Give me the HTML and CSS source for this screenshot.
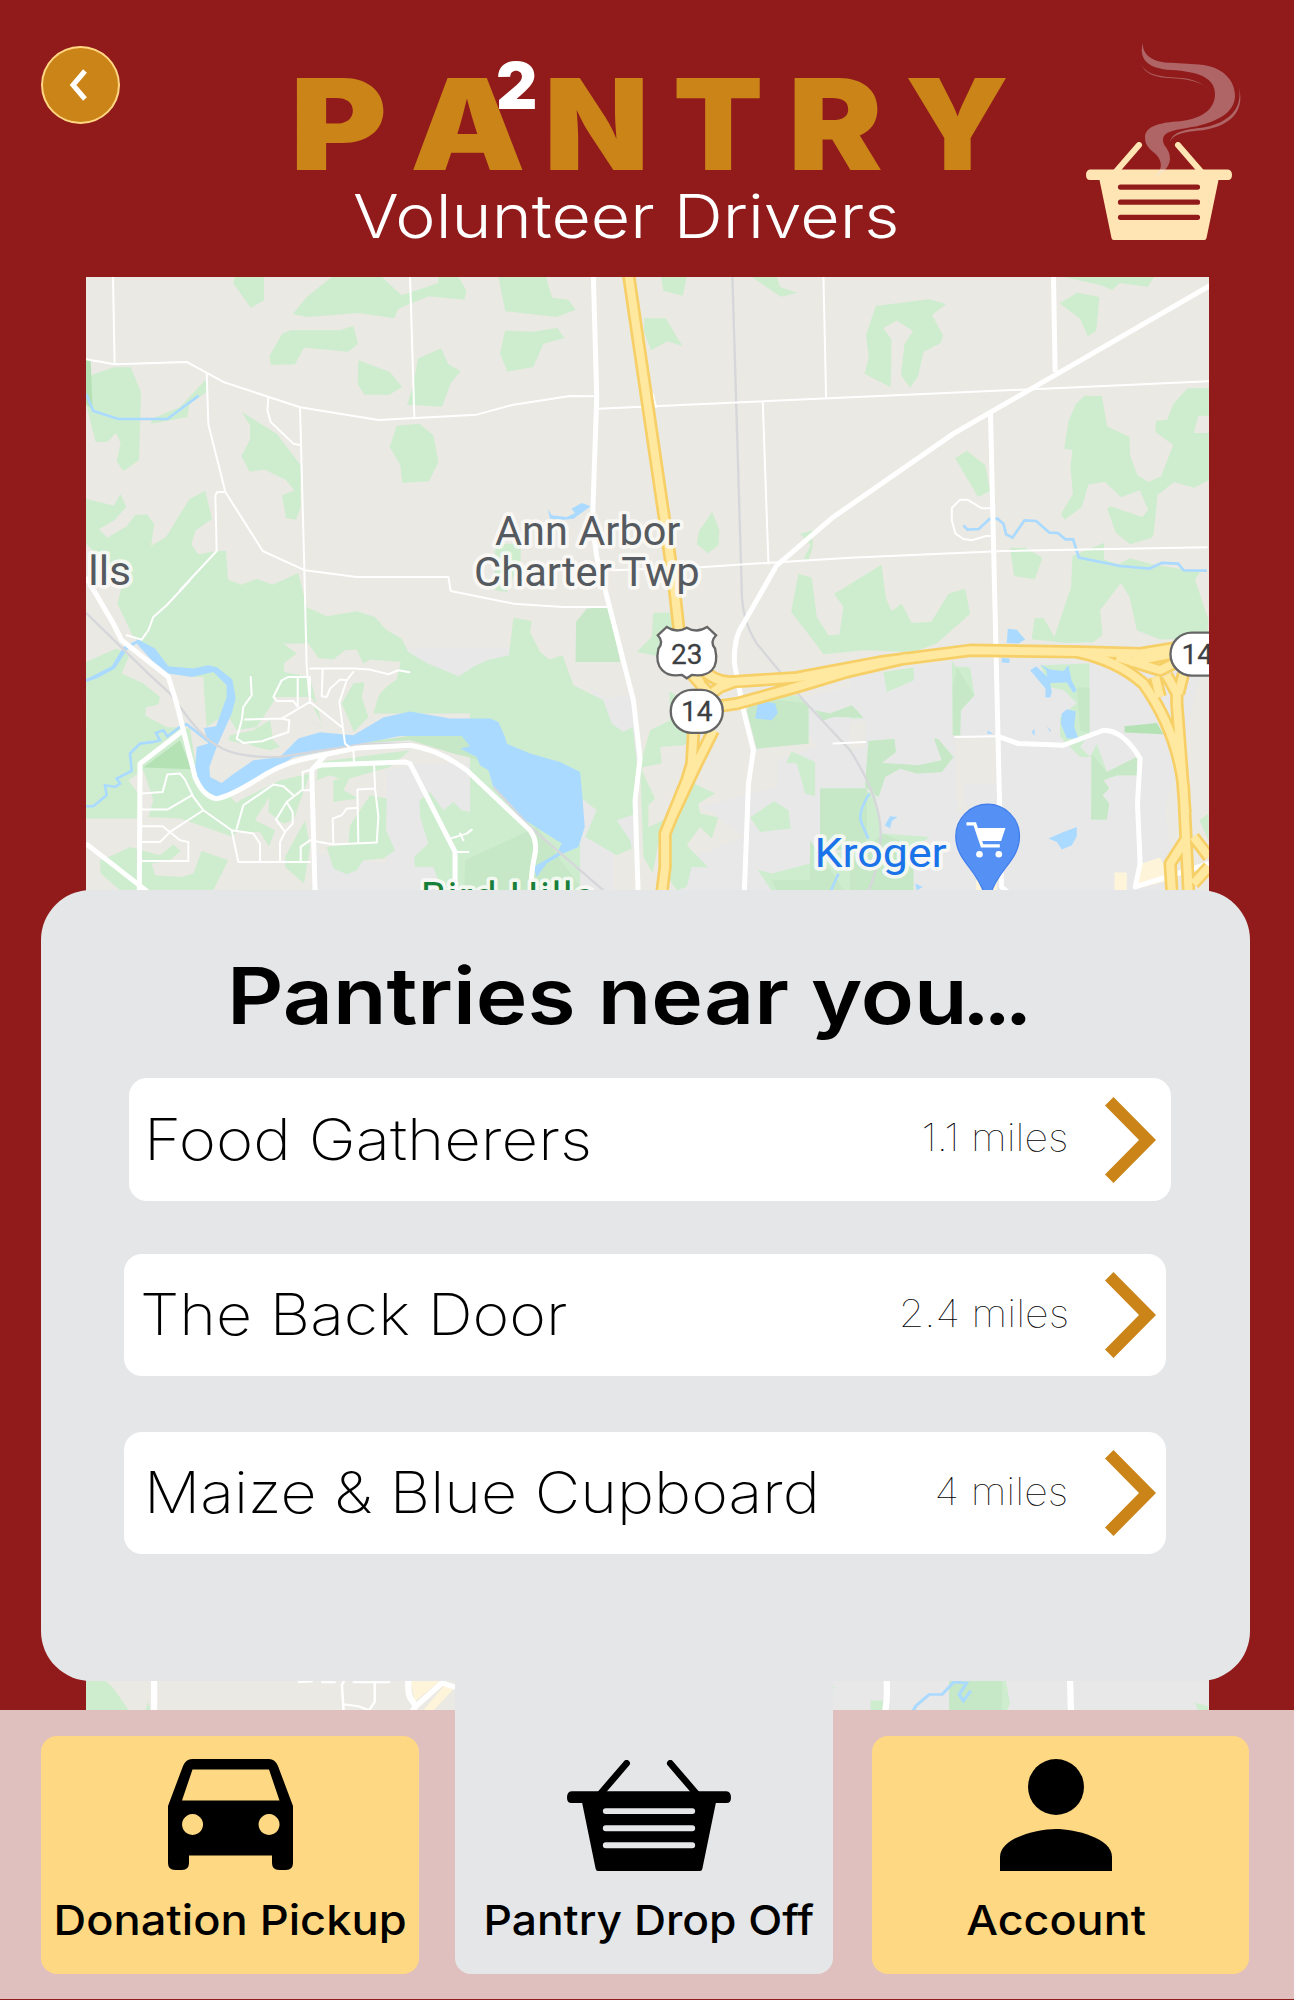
FILE: index.html
```html
<!DOCTYPE html>
<html lang="en">
<head>
<meta charset="utf-8">
<title>Pantry – Volunteer Drivers</title>
<link rel="stylesheet" href="styles.css">
</head>
<body>
<svg class="defs" width="0" height="0" aria-hidden="true">
  <symbol id="basket" viewBox="0 0 146 98" preserveAspectRatio="none">
    <path d="M27 33 53 3M118 33 92 3" fill="none" stroke="currentColor" stroke-width="6" stroke-linecap="round"/>
    <path fill="currentColor" fill-rule="evenodd" d="M4 27.500H142Q146 28 146 33T142 38H132.500L120.500 96Q120 98 118.500 98H27.500Q26 98 25.500 96L13.500 38H4Q0 38 0 33T4 27.500ZM34.500 42.500a2.600 2.600 0 0 0 0 5.200H111.500a2.600 2.600 0 0 0 0-5.200ZM34.500 57.600a2.600 2.600 0 0 0 0 5.200H111.500a2.600 2.600 0 0 0 0-5.200ZM34.500 72.700a2.600 2.600 0 0 0 0 5.200H111.500a2.600 2.600 0 0 0 0-5.200Z"/>
  </symbol>
  <symbol id="chevron" viewBox="0 0 51 86">
    <path fill="currentColor" d="M0 8.500 8.500 0 51 43 8.500 86 0 77.500 34 43Z"/>
  </symbol>
</svg>

<header class="header">
  <button class="back" aria-label="Back"><svg width="18" height="36" viewBox="0 0 18 36"><path d="M16 4 4 18 16 32" fill="none" stroke="#fff" stroke-width="5"/></svg></button>
  <div class="brand">
    <h1 class="logo"><span class="l1">P</span><span class="l2">A</span><span class="l3">N</span><span class="l4">T</span><span class="l5">R</span><span class="l6">Y</span><sup class="two">2</sup></h1>
    <p class="subtitle"><span>Volunteer Drivers</span></p>
  </div>
  <div class="mark">
    <svg class="mark-basket"><use href="#basket"/></svg>
    <svg class="steam" viewBox="0 0 102 172" preserveAspectRatio="none">
      <path d="M2 0C1 8 4 25 30 26L58 28C82 30 94 48 94 68C93 88 78 98 56 105C38 109 22 110 22 122C22 131 29 132 29 146C28 158 20 165 11 170C20 162 21 154 19 148C17 137 4 135 4 119C4 105 18 101 35 99C60 97 74 84 74 65C74 45 58 37 30 35C3 33-2 18 2 0Z"/>
      <path d="M0 28C8 48 27 43 46 47Q64 51 69 62Q60 47 40 45C22 43 7 43 0 28ZM98 57C105 91 84 106 62 110C44 112 31 114 29 126C30 111 47 109 61 107C84 102 102 87 98 57Z"/>
    </svg>
  </div>
</header>

<main class="stage">
<svg class="map" viewBox="18 20 3367 4301" preserveAspectRatio="none" role="img" aria-label="Map of Ann Arbor">
  <rect class="land" x="0" y="0" width="3400" height="4330"/>
  <g class="urban">
    <path transform="translate(0 930)" d="M980 205H1300V330H1130ZM920 570 1020 550H1600V1000H700V820L920 850ZM1170 200 1340 205 1320 300ZM1530 320 1670 420V520L1560 480Z"/>
    <path transform="translate(1170 930)" d="M395 360 490 340 520 560 400 430ZM690 680 920 620V540L1040 500 960 360 1400 260H2200L2000 1000H620V850L820 770 730 700ZM330 660 380 690 340 720ZM430 720 490 700V800L430 760Z"/>
    <path transform="translate(2310 930)" d="M0 290 330 240 880 250 990 1000H0Z"/>
    <path transform="translate(1680 4190)" d="M500 0H1710V131H500Z"/>
  </g>
  <g class="land">
    <path transform="translate(2310 930)" d="M315 470H440V610H340V660L370 700 322 695ZM0 425 45 420V500L0 510Z"/>
  </g>
  <g class="grass">
    <path d="M465 20H552V90L512 112 459 38ZM755 20H905L965 75 1075 38V20H1135L1159 60 1153 88 1045 78 955 115 942 144 835 128 685 140 638 132 680 80ZM632 180H780L820 167 834 220 805 244 672 232 645 282 572 284 568 258 606 190ZM835 270 930 305 966 350 928 373H853L833 340ZM1013 265 1083 234 1105 282 1142 303 1112 338 1086 409 981 403 1000 345ZM950 466 1018 460 1060 495 1075 575 1047 633 967 638 960 582 929 530ZM485 425 590 490 662 585V710L648 748 618 744 606 675 643 660 617 628 555 598 508 604 484 557 510 508V465ZM18 320 103 291H152L183 365 177 570 130 602 110 573 122 518 108 488 82 515H47L18 400ZM215 445 300 410 380 325V365L328 400 322 440 214 460ZM18 685 102 706 121 670 139 710 103 750 57 777 82 802 140 768 165 735 200 732 223 760 213 827 258 800 328 686 376 661 396 746 347 780 334 822 354 852 412 842H438L444 928 484 943 530 926 578 943 655 908 680 1010 740 1038 830 1023 885 1040 920 1080 965 1105 985 1145 1040 1178 1135 1218 1200 1180V1330H1100L880 1330 900 1260 950 1228 962 1175 870 1168 850 1180 830 1138 795 1140 760 1168 715 1163 685 1120 610 1120 650 1150 612 1178 612 1205 690 1220 720 1340 728 1372 700 1360 690 1300 640 1290 590 1280 530 1370 470 1380 440 1330 380 1370 370 1240 330 1215 260 1195 160 1100 112 1000 130 930 18 820Z"/>
    <path transform="translate(0 930)" d="M18 245 110 205 148 225 125 280 190 310 240 350 235 375 200 380 195 405 260 440 330 445 345 540 500 700 460 770 300 715 205 710 220 660 190 570 145 600 175 640V715H18V440L45 405 60 350 110 320 168 345 165 378 105 358V405L180 430 140 475 20 462ZM520 450 570 420 580 480 600 500 570 510 445 480 450 465ZM820 310 855 305 845 350 865 410 822 455 785 370ZM60 840 110 820 150 800 240 825 280 793 302 812 270 840 215 850 225 885 305 890 340 880 365 812 445 840 400 930H120L62 880ZM480 660 600 600 690 580 640 720 610 730 565 695 568 650 525 720 585 750 567 800 540 755 475 755 440 700ZM715 545 990 510 930 560 790 600 750 585 710 600ZM760 600 810 590 790 630 835 655 760 665ZM870 645 920 655 918 750 945 810 910 835 850 840 830 870 800 882 760 865 740 800 805 790 810 735ZM615 830 675 720 690 800 672 910 615 860ZM1050 635 1090 690 1120 665 1145 690 1190 700 1240 695 1400 1000H1110L1060 860 1005 860 1002 830 1045 790 1020 710 1018 660Z"/>
    <path transform="translate(1170 0)" d="M85 20H228L246 82 295 88 317 118 260 140 106 123ZM105 181 190 184 262 173 283 203 220 220 190 290 112 304 90 250ZM522 144H587L637 227 592 213 543 240 522 185ZM573 20H650L638 76 580 62ZM845 20H920L930 50 982 67 932 79ZM726 724 748 780 745 825 714 849 680 822 687 782ZM990 790 1028 780V830L1015 870 1000 865 1022 825ZM985 910 1025 922 1040 1040 1075 1095 1108 1093 1120 1010 1092 970 1110 960 1234 883 1248 985 1265 1022 1295 1000 1325 1058 1383 1055 1435 970 1485 955 1500 1030 1400 1120 1330 1145 1180 1140 1060 1152 1010 1085 963 1025ZM75 820H152V870L110 965 75 960Z"/>
    <path transform="translate(1170 930)" d="M0 265 50 240 117 225 130 112 185 122 180 155 210 215 238 238 278 225 310 315 400 360 425 430 460 455 488 440 500 550 500 700 440 720 480 780 485 805 440 825 345 770 380 690 330 650V930H0L0 400ZM318 125 350 85 415 80 450 245H317ZM550 97H600L625 240 500 215 545 170ZM598 332 650 370 650 490 640 495 570 500 575 550 520 560 500 590 540 450 600 420ZM510 560 555 655 535 675V740L580 720 650 600 735 640 685 670 690 700 745 712 725 775 690 740 650 795 715 862 665 860 650 920 620 930 600 900 585 760 570 760 548 880 520 830ZM860 340 910 350 980 345 1015 370V490L860 505 830 390ZM965 514 1035 545V648L1005 640 980 550 948 548ZM840 712 912 662 955 690 962 745 870 755ZM862 868 905 880 1020 850 1200 780V1000H950ZM1050 625H1190L1210 800 1050 810Z"/>
    <path transform="translate(2310 0)" d="M640 20H912L893 49 807 38 787 59 750 44ZM628 99 682 67 748 80 738 182 713 198 690 145ZM77 107 235 87 288 101 246 134 279 196 271 219 220 244 204 318 180 352 153 315 163 222 189 182 140 151 99 173 124 207 122 351 43 310 56 265 48 194ZM350 541 405 584 420 662 384 680 315 564ZM703 376 755 377 771 468 838 500 840 556 862 615 895 635 933 618 969 524 915 484 918 451 951 449 969 402 1012 354H1076V436H1045L1031 488H1076V630L1032 652 971 635 922 675 910 795 902 804 840 822 797 787 771 715 780 708 877 740 894 718 869 660 812 681 765 635 715 642 695 710 644 748 632 732 668 670 661 590 667 538 642 535 655 452 677 402ZM480 832H525L577 862 554 927 492 918ZM667 857 762 817V868L805 882 840 864 905 882 1050 905 1035 928 1075 1050 1070 1105 930 1108 860 1080 838 980 812 938 750 1020 757 1095 730 1115 650 1118 545 1107 553 1043 580 1043 613 1100 663 950Z"/>
    <path transform="translate(2310 930)" d="M100 275 190 262 192 300 110 335ZM305 240 315 258 360 262 373 345 332 390 330 465H308ZM570 255 718 250V460L690 500 720 530 740 490 770 575 860 530V585L800 585 760 600 777 625 757 645 777 670 770 718H723V530H690L630 470V410L680 368 640 330 600 320ZM55 482 133 476 137 515 95 548 205 555 275 540 252 475 265 478 310 530 275 575 200 580 150 565 105 590 85 650 45 620ZM0 622 75 640 95 760 240 770 190 800V930H0ZM1048 720 1075 700V780ZM1 375 40 415 0 415Z"/>
    <path transform="translate(-240 4170) scale(1.263 1)" d="M200 60H250L270 85 306 151H200ZM345 151 352 125 357 151Z"/>
    <path transform="translate(1680 4170) scale(1.251 1)" d="M553 121H583V151H553ZM741 62H877L887 130 880 151H741ZM1331 128 1362 138V151H1337ZM463 78 468 82 463 88Z"/>
  </g>
  <g class="park">
    <path d="M18 265 32 270 38 420 18 400ZM190 1492 300 1410 335 1497Z"/>
    <path transform="translate(0 930)" class="soft" d="M830 490 1000 465 1150 465 1200 540 1120 520 990 480ZM1155 840 1370 740 1560 1000H1150Z"/>
    <path transform="translate(1170 930)" class="soft" d="M318 125 350 85 415 80 450 245H317ZM860 350 1015 370V490L860 505 830 390ZM1050 625H1190V810H1050ZM1035 390 1080 400 1145 375 1180 412 1090 410 1060 420ZM905 900 1020 900V780L1170 1000H950Z"/>
    <path transform="translate(2310 930)" class="soft" d="M308 320 320 260 373 345 332 390 330 465H308ZM680 322H718V460L690 450ZM725 520 770 575 860 530V585L800 585 760 600 777 625 757 645 777 670 770 718H723ZM55 482 133 476 137 515 95 548 205 555 275 540 252 475 265 478 310 530 275 575 200 580 150 565 105 590 85 650 45 620ZM0 840 100 760 190 800V930H0Z"/>
    <path transform="translate(2310 930)" d="M823 438 920 428 940 462 823 457Z"/>
    <path transform="translate(1680 4170) scale(1.251 1)" class="soft" d="M741 62H868V151H741Z"/>
  </g>
  <g class="land">
    <path transform="translate(0 930)" d="M195 385 240 370 275 340 300 400 270 430 210 415ZM265 290 370 290 375 400 320 380ZM395 560 500 490 600 530 480 580 425 608 390 590ZM585 350 690 350 780 430 700 380 730 440 700 430 690 380 640 390 615 430 570 405ZM735 270 830 275 790 350 745 340ZM850 300 930 275 950 290 900 340 870 400Z"/>
  </g>
  <g class="sand">
    <path transform="translate(2310 930)" d="M793 877H830V930H793ZM875 850 930 832 945 860 960 900 860 925ZM378 900H440V930H378Z"/>
    <path transform="translate(-240 4170) scale(1.263 1)" d="M975 60H1048L985 125ZM1005 151 1055 75 1082 80 1030 151Z"/>
  </g>

  <g class="water">
    <path transform="translate(0 930)" d="M18 297 95 258 130 200 155 188 175 178 225 205 265 258 340 265 385 255 412 262 457 298 467 355 455 400 410 500 388 560 390 590 425 608 455 585 520 540 600 530 655 475 720 456 820 465 910 412 990 394 1110 415H1230L1255 425 1275 470 1280 490 1350 520 1440 545 1500 575 1507 650 1514 740 1495 800 1450 820 1400 850 1370 890 1360 860 1430 820 1445 790 1320 710 1240 620 1225 570 1200 555 1190 530 1140 505 1170 498 1145 467 960 467 820 495 640 530 500 620 410 650 360 620 345 570 350 500 385 490 372 443 408 438 440 350 440 315 400 275 335 290 265 280 215 240 170 190 140 210 105 265 50 295 18 305Z"/>
    <path class="stream" d="M18 370 40 422 115 446H262L356 376"/>
    <path class="stream" transform="translate(0 930)" d="M18 678H40L80 645 75 615 105 620 120 610 110 595 155 572 150 520 180 490 220 485 240 480 228 458 250 450 262 468 300 440 320 432 400 495"/>
    <path transform="translate(1170 0)" d="M233 716 245 735 290 740 315 728 304 715 335 698 362 708 345 720 310 745 280 748 240 745Z"/>
    <path class="stream" transform="translate(2310 0)" d="M340 765 352 778 386 776 418 746 442 745 460 760 468 792 487 802 523 750 558 752 598 787 623 788 646 807H669L686 862 810 887 897 895 935 878 984 880 1000 900 1070 901"/>
    <path transform="translate(1170 930)" d="M863 372 890 365 915 370 923 398 905 420 855 415Z"/>
    <path transform="translate(2310 930)" d="M473 145 500 148 525 178 505 190 470 188ZM455 233 478 235V248L455 247ZM540 270 558 258 592 290 588 270 570 253 600 268 640 272 655 255 664 300 680 330 670 338 650 307 600 308 605 335 600 352 586 352V325ZM650 387 677 393 672 440 685 475 650 475 632 430 635 400ZM595 775 640 755 680 740V768L665 795 635 808 620 785ZM120 708 142 710 125 722 120 745 104 735ZM412 450 430 462 412 460ZM545 455 553 445V468ZM590 437 602 450 600 455ZM195 910 218 920 200 930Z"/>
    <path class="stream" transform="translate(2310 930)" d="M58 640Q20 700 35 730L55 775M-35 880-70 960"/>
    <path class="stream" transform="translate(1680 4170) scale(1.251 1)" d="M655 151 662 136 693 103H724L752 66 783 68 765 103 775 122 793 92"/>
  </g>

  <g class="rail">
    <path d="M18 1028 205 1210 270 1270 330 1350C390 1430 450 1465 600 1460L860 1420 990 1420 1140 1480M1240 1550 1350 1670 1570 1860"/>
    <path transform="translate(1170 0)" d="M787 20 815 960Q815 1050 860 1120L1000 1290 1140 1440Q1230 1580 1232 1690 1225 1800 1195 1860"/>
  </g>

  <g class="minor">
    <path d="M99 20 104 282M18 267 104 282 320 275 430 335 660 411 895 449 1190 433 1300 403 1470 377 1550 378M565 382 562 420 572 455 640 520 660 524M380 310 385 462 436 665 548 842 675 900 830 920H1105L1112 962 1300 1000 1450 1010H1580M436 665H412L406 675 410 842 300 960M990 20 1003 442M660 411 672 860 680 1190 690 1295M1555 415 3385 333"/>
    <path transform="translate(0 930)" d="M330 0 260 75 220 110 205 150 185 178 140 165"/>
    <path transform="translate(1170 0)" d="M1060 20 1068 380M878 395 895 880M425 900 700 890 1140 862 1600 842 2210 831M548 370 558 410"/>
    <path transform="translate(2310 0)" d="M428 714H395L352 688H330L305 713V750L316 790 340 806 365 810 408 797H430"/>
    <path transform="translate(0 930)" d="M512 290 515 345 490 380 485 420 470 475 490 488 545 483 625 455 628 420 605 415 495 418M605 415 690 365 690 290H625L605 300 580 350 590 362H640L653 380V290M690 265H820L870 268 925 282 955 270 988 276M728 268 725 348 740 350 750 325 780 298 800 300 820 275M800 300 778 365 795 490 820 510 822 545M690 365 785 440M185 640 248 635 262 583 300 580 315 598 340 650 370 690 455 750 520 760 540 790V840M185 688H262L335 645M370 690 270 755 240 785H185M185 738H248L300 780 325 785V842H185M455 750 475 845H690M470 745 490 675 580 613 610 618 640 645M690 630H665L620 665 588 718 615 755 600 785V840M620 665 638 695V730L615 755M720 560 668 575V630M690 780 662 800V840M690 780 760 793 890 787 895 710 885 625 832 628 835 790M760 793 758 715 785 705 800 685 828 683M885 625 882 550M1110 775 1160 760 1175 748M1130 815H1165M1140 760 1150 780"/>
    <path transform="translate(2310 930)" d="M315 470 440 468M-50 490 45 485"/>
    <path transform="translate(-240 4170) scale(1.263 1)" d="M818 60 812 75 816 151M816 132 850 138 878 151M890 60V125L878 148M710 66 740 64M765 66H795M840 66H925"/>
  </g>

  <g class="major">
    <path d="M18 920 100 1060 125 1110 265 1220 290 1300 345 1520Q370 1580 410 1585 450 1580 560 1510 620 1475 700 1460L830 1433 990 1425Q1080 1440 1160 1500L1350 1680Q1372 1710 1365 1750 1350 1820 1355 1860M310 1380 180 1480 178 1860M18 1720 210 1870M735 1455 695 1500 705 1860M710 1485 975 1475 990 1480 1125 1745V1860"/>
    <path transform="translate(1170 0)" d="M370 20 380 380 367 760 380 860 490 1290 510 1465 495 1590 504 1860"/>
    <path transform="translate(1170 0)" d="M2220 45 1450 490 1090 740 920 885 820 1060Q790 1100 793 1180L820 1320 850 1440 835 1540 823 1860"/>
    <path transform="translate(2310 0)" d="M610 20 615 305M421 425 454 1850 490 1880M448 1400 505 1420 640 1425 760 1380Q820 1380 870 1465L862 1600 870 1780 855 1850 1076 1780"/>
    <path transform="translate(-240 4170) scale(1.263 1)" d="M366 60V151M970 60Q968 100 975 115L988 138 1050 68 1082 82M988 138 980 151"/>
    <path transform="translate(1680 4170) scale(1.251 1)" d="M591 60Q594 110 588 151M1031 60 1033 151"/>
  </g>

  <g class="highway-edge">
    <path d="M1645 10 1780 930 1800 1110 1870 1260M1800 1170 1860 1240 1895 1280M1860 1190Q1900 1235 1950 1235L2150 1222 2400 1175 2670 1140 3000 1145 3180 1150 3300 1130M1880 1280 1920 1250 1960 1235M1900 1310 1970 1300 2150 1250 2300 1205 2480 1163M1840 1390 1835 1480 1820 1530 1755 1690 1755 1790 1745 1870M1900 1380 1850 1480 1775 1640"/>
    <path transform="translate(2310 930)" d="M680 215Q800 240 880 310 980 450 1000 620L1015 930M800 230 930 270 990 240M840 245 990 215M950 285 980 340 980 370 1005 700M1000 280 985 340M915 290 930 350M1005 780 960 850 965 930M1030 770 1076 830M1030 910 1076 860"/>
  </g>
  <g class="highway">
    <path d="M1645 10 1780 930 1800 1110 1870 1260M1800 1170 1860 1240 1895 1280M1860 1190Q1900 1235 1950 1235L2150 1222 2400 1175 2670 1140 3000 1145 3180 1150 3300 1130M1880 1280 1920 1250 1960 1235M1900 1310 1970 1300 2150 1250 2300 1205 2480 1163M1840 1390 1835 1480 1820 1530 1755 1690 1755 1790 1745 1870M1900 1380 1850 1480 1775 1640"/>
    <path transform="translate(2310 930)" d="M680 215Q800 240 880 310 980 450 1000 620L1015 930M800 230 930 270 990 240M840 245 990 215M950 285 980 340 980 370 1005 700M1000 280 985 340M915 290 930 350M1005 780 960 850 965 930M1030 770 1076 830M1030 910 1076 860"/>
  </g>

  <g class="shield">
    <path transform="translate(1170 930)" d="M590 140Q620 160 650 142 680 160 711 140L738 165Q718 185 735 205 745 250 725 270 705 290 665 284L650 294 636 284Q595 290 577 270 555 250 565 205 582 185 563 165Z"/>
    <rect x="1772" y="1259" width="156" height="129" rx="64"/>
    <rect x="3271" y="1087" width="180" height="129" rx="64"/>
    <text x="1820" y="1180" text-anchor="middle">23</text>
    <text x="1850" y="1352" text-anchor="middle">14</text>
    <text x="3304" y="1180">14</text>
  </g>
  <g class="place">
    <text x="25" y="944" textLength="128" lengthAdjust="spacingAndGlyphs">lls</text>
    <text x="1245" y="824" textLength="556" lengthAdjust="spacingAndGlyphs">Ann Arbor</text>
    <text x="1182" y="948" textLength="677" lengthAdjust="spacingAndGlyphs">Charter Twp</text>
    <text class="green" x="1022" y="1922" textLength="523">Bird Hills</text>
    <text class="blue" x="2203" y="1790" textLength="397" lengthAdjust="spacingAndGlyphs">Kroger</text>
  </g>
  <g transform="translate(2310 930)">
    <path d="M317 768A95.500 96 0 0 1 508 768C508 840 445 865 422 940H402C380 865 317 840 317 768Z" fill="#5590f5" stroke="#4480ec" stroke-width="4"/>
    <path d="M349 731H374L396 797H449" fill="none" stroke="#fff" stroke-width="10"/>
    <path d="M376 743H466L453 782H392Z" fill="#fff"/><circle cx="388" cy="822" r="10" fill="#fff"/><circle cx="446" cy="822" r="10" fill="#fff"/>
  </g>
</svg>

<section class="panel">
  <h2 class="panel-title"><span>Pantries near you<b class="dots">...</b></span></h2>
  <ul class="list">
    <li class="row first"><span class="name n1">Food Gatherers</span><span class="miles">1.1 miles</span><svg class="chev"><use href="#chevron"/></svg></li>
    <li class="row"><span class="name n2">The Back Door</span><span class="miles">2.4 miles</span><svg class="chev"><use href="#chevron"/></svg></li>
    <li class="row last"><span class="name n3">Maize &amp; Blue Cupboard</span><span class="miles">4 miles</span><svg class="chev"><use href="#chevron"/></svg></li>
  </ul>
</section>
</main>

<nav class="tabs">
  <a class="tab">
    <svg width="125" height="111" viewBox="0 0 125 111"><path fill-rule="evenodd" d="M24 0H101Q107 0 110 7L125 47V104Q125 111 118 111H111Q104 111 104 104V96.500H21V104Q21 111 14 111H7Q0 111 0 104V47L15 7Q18 0 24 0ZM24.500 10.500H101L111.500 41.500H14ZM24.500 55a10.500 10.500 0 1 0 .1 0ZM101 55a10.500 10.500 0 1 0 .1 0Z"/></svg>
    <span class="t1">Donation Pickup</span>
  </a>
  <a class="tab active">
    <svg width="164" height="111"><use href="#basket"/></svg>
    <span class="t2">Pantry Drop Off</span>
  </a>
  <a class="tab account">
    <svg width="112" height="112" viewBox="0 0 112 112"><circle cx="56" cy="28" r="28"/><path d="M0 112V98C0 79 37 70 56 70S112 79 112 98V112Z"/></svg>
    <span class="t3">Account</span>
  </a>
</nav>
</body>
</html>
```
FILE: styles.css
```css
* { box-sizing: border-box; }
body {
  margin: 0;
  width: 1294px;
  height: 2000px;
  overflow: hidden;
  display: grid;
  grid-template-rows: 276.5px 1433.5px 289px;
  background: #911b1b;
  font-family: Inter, "Open Sans", sans-serif;
  color: #000;
}
h1, h2, p, ul { margin: 0; padding: 0; }
.defs { position: absolute; }

/* Header */
.header { position: relative; display: grid; grid-template-columns: 297px 711px 286px; }
.back {
  width: 79px; height: 78px; margin: 46px 0 0 41px; padding: 0 5px 0 0;
  border: 2px solid #ffd782; border-radius: 50%; background: #cb8418;
  display: flex; align-items: center; justify-content: center;
}
.brand { padding-top: 74px; }
.logo {
  position: relative; display: grid; height: 100px; margin-left: -7px;
  grid-template-columns: 120px 134px 129px 115px 117px 100px;
  font-size: 126.500px; line-height: 100px; font-weight: 900; color: #cb8418;
}
span { display: inline-block; white-space: nowrap; transform-origin: 0 50%; }
.logo span { justify-self: start; }
.l1 { transform: scaleX(1.17); }
.l2 { transform: scaleX(1.15); }
.l3 { transform: scaleX(1.08); }
.l4 { transform: scaleX(1.04); }
.l5 { transform: scaleX(1.12); }
.l6 { transform: scaleX(1.06); }
.two { position: absolute; left: 206px; top: -38px; font-size: 64px; color: #fff; }
.subtitle { padding: 10px 0 0 56px; font-size: 60px; line-height: 64px; font-weight: 300; color: #fff; }
.subtitle span { transform: scaleX(1.134); }
.mark { position: relative; padding: 142px 0 0 78px; color: #ffe5b3; }
.mark-basket { display: block; width: 146px; height: 98px; }
.steam { position: absolute; left: 133px; top: 42px; width: 102px; height: 138px; fill: #e5e6e9; fill-opacity: .36; }

/* Map */
.stage { display: grid; grid-template-columns: 41px 45px 1122.500px 41px 1fr; grid-template-rows: 613px 791.500px 1fr; }
.map { grid-area: 1 / 3 / 4 / 4; width: 100%; height: 100%; display: block; }
.land { fill: #eae9e3; }
.urban { fill: #e8e8e8; }
.grass { fill: #ceedcf; }
.park { fill: #b5e2b5; }
.soft { fill: #c6e8c7; }
.sand { fill: #fdf4da; }
.water { fill: #aadaff; }
.stream { fill: none; stroke: #aadaff; stroke-width: 8; }
.rail { fill: none; stroke: #d6d7da; stroke-width: 7; }
.minor { fill: none; stroke: #fff; stroke-width: 6; stroke-linejoin: round; stroke-linecap: round; }
.major { fill: none; stroke: #fff; stroke-width: 15; stroke-linejoin: round; }
.highway, .highway-edge { fill: none; stroke: #ffe9a0; stroke-width: 24; stroke-linejoin: round; }
.highway-edge { stroke: #f7cf67; stroke-width: 40; }
.shield { fill: #fff; stroke: #666; stroke-width: 7; font: 84px Roboto, sans-serif; }
.shield text { fill: #3c4043; stroke: #3c4043; stroke-width: .8; }
.place { font: 122px Roboto, sans-serif; fill: #555a60; stroke: #fbfaf8; stroke-opacity: .85; stroke-width: 22; paint-order: stroke; stroke-linejoin: round; }
.green { fill: #188038; }
.blue { fill: #1a73e8; }

/* Pantry list */
.panel { grid-area: 2 / 2 / 3 / 5; background: #e5e6e8; border-radius: 50px; padding: 61px 83px 0; }
.panel-title { height: 90px; padding-left: 103px; font-size: 78px; line-height: 90px; font-weight: 600; }
.panel-title span { transform: scaleX(1.122); }
.dots { font-weight: inherit; letter-spacing: -6px; margin-left: -5px; }
.list { list-style: none; display: grid; gap: 53px; padding-top: 37.500px; width: 1042px; }
.row { display: flex; align-items: center; height: 122.500px; background: #fff; border-radius: 18px; padding: 0 10px 0 16px; }
.first { position: relative; left: 5px; padding: 0 15px 0 14.500px; }
.last { margin-top: 2.500px; padding-left: 20px; }
.name { font-size: 57px; font-weight: 200; }
.n1 { transform: scaleX(1.115); }
.n2 { transform: scaleX(1.1); }
.n3 { transform: scaleX(1.1); }
.miles { margin: 0 36.500px 4px auto; font-size: 38px; font-weight: 100; transform: scaleX(1.085); transform-origin: 100% 50%; }
.chev { width: 51px; height: 86px; margin-top: 1px; color: #cb8418; }

/* Bottom navigation */
.tabs { display: grid; grid-template-columns: 377.500px 377.500px 377.500px; column-gap: 36.700px; padding: 26px 0 25px 41.300px; background: #dfc0be; }
.tab {
  height: 238px; padding: 23px 0 29px; border-radius: 16px; background: #ffd883;
  display: flex; flex-direction: column; align-items: center; justify-content: space-between;
  font-size: 41px; line-height: 50px; font-weight: 500;
}
.tab span { transform-origin: 50% 50%; }
.t1 { transform: scaleX(1.103); }
.t2 { transform: scaleX(1.082); }
.t3 { transform: scaleX(1.095); }
.active { margin-top: -55px; height: 293px; padding: 79px 0 29px 9px; border-radius: 0 0 16px 16px; background: #e5e6e8; }
.account { margin-left: 2px; margin-right: -2px; padding-right: 9px; }
```
